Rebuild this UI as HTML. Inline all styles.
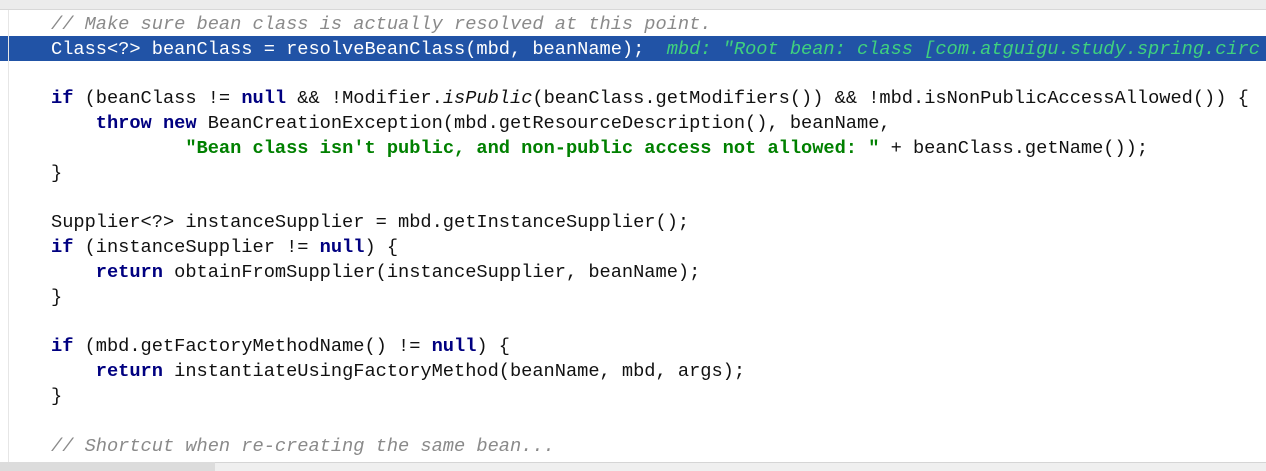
<!DOCTYPE html>
<html><head><meta charset="utf-8"><style>
html,body{margin:0;padding:0;background:#fff;width:1266px;height:471px;overflow:hidden;position:relative}
.top{position:absolute;left:0;top:0;width:1266px;height:9px;background:#ececec;border-bottom:1px solid #d8d8d8}
.bot{position:absolute;left:0;top:462px;width:1266px;height:9px;background:#efefef;border-top:1px solid #d5d5d5}
.bot2{position:absolute;left:0;top:462px;width:215px;height:9px;background:#dcdcdc}
.gut{position:absolute;left:8px;top:10px;width:1px;height:452px;background:#e6e6e6}
.hl{position:absolute;left:0;top:36px;width:1266px;height:25px;background:#2153a6}
.code{position:absolute;left:51px;top:12px;font-family:"Liberation Mono",monospace;font-size:18.7px;line-height:24.8px;white-space:pre;color:#111;letter-spacing:-0.02px}
.k{color:#000080;font-weight:bold}
.s{color:#008000;font-weight:bold}
.c{color:#8a8a8a;font-style:italic}
.w{color:#fff}
.d{color:#3fd17e;font-style:italic}
</style></head><body>
<div class="top"></div>
<div class="hl"></div>
<div class="gut"></div>
<div class="code"><span class="c">// Make sure bean class is actually resolved at this point.</span>
<span class="w">Class&lt;?&gt; beanClass = resolveBeanClass(mbd, beanName);</span>  <span class="d">mbd: "Root bean: class [com.atguigu.study.spring.circ</span>

<span class="k">if</span> (beanClass != <span class="k">null</span> &amp;&amp; !Modifier.<i>isPublic</i>(beanClass.getModifiers()) &amp;&amp; !mbd.isNonPublicAccessAllowed()) {
    <span class="k">throw new</span> BeanCreationException(mbd.getResourceDescription(), beanName,
            <span class="s">"Bean class isn't public, and non-public access not allowed: "</span> + beanClass.getName());
}

Supplier&lt;?&gt; instanceSupplier = mbd.getInstanceSupplier();
<span class="k">if</span> (instanceSupplier != <span class="k">null</span>) {
    <span class="k">return</span> obtainFromSupplier(instanceSupplier, beanName);
}

<span class="k">if</span> (mbd.getFactoryMethodName() != <span class="k">null</span>) {
    <span class="k">return</span> instantiateUsingFactoryMethod(beanName, mbd, args);
}

<span class="c">// Shortcut when re-creating the same bean...</span></div>
<div class="bot"></div><div class="bot2"></div>
</body></html>
